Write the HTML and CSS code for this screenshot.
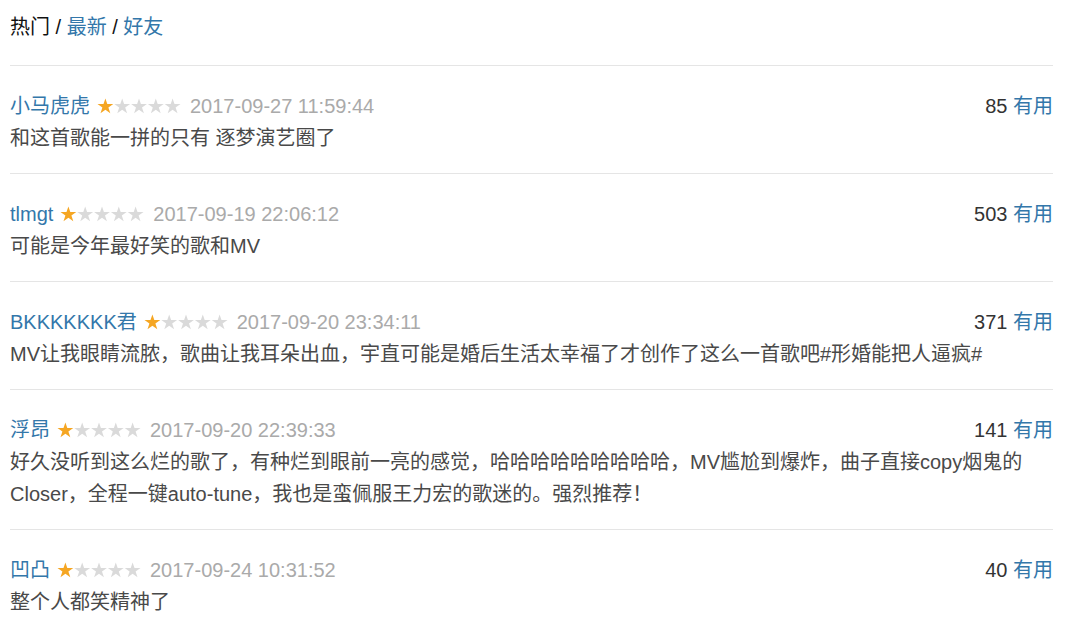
FILE: index.html
```html
<!DOCTYPE html>
<html lang="zh-CN">
<head>
  <meta charset="UTF-8">
  <title>短评</title>
  <link rel="stylesheet" href="styles.css">
</head>
<body>
  <div class="comentarios">
    <div class="pestanas">
      <span>热门</span> / <a href="#">最新</a> / <a href="#">好友</a>
    </div>

    <div class="comentario">
      <div class="cabecera">
        <a href="#" class="autor">小马虎虎</a>
        <svg class="estrellas" viewBox="0 0 84 16"><use href="#s1"/></svg>
        <span class="fecha">2017-09-27 11:59:44</span>
        <span class="votos"><span class="numero">85</span> <a href="#">有用</a></span>
      </div>
      <p class="texto">和这首歌能一拼的只有 逐梦演艺圈了</p>
    </div>

    <div class="comentario">
      <div class="cabecera">
        <a href="#" class="autor">tlmgt</a>
        <svg class="estrellas" viewBox="0 0 84 16"><use href="#s1"/></svg>
        <span class="fecha">2017-09-19 22:06:12</span>
        <span class="votos"><span class="numero">503</span> <a href="#">有用</a></span>
      </div>
      <p class="texto">可能是今年最好笑的歌和MV</p>
    </div>

    <div class="comentario">
      <div class="cabecera">
        <a href="#" class="autor">BKKKKKKK君</a>
        <svg class="estrellas" viewBox="0 0 84 16"><use href="#s1"/></svg>
        <span class="fecha">2017-09-20 23:34:11</span>
        <span class="votos"><span class="numero">371</span> <a href="#">有用</a></span>
      </div>
      <p class="texto">MV让我眼睛流脓，歌曲让我耳朵出血，宇直可能是婚后生活太幸福了才创作了这么一首歌吧#形婚能把人逼疯#</p>
    </div>

    <div class="comentario">
      <div class="cabecera">
        <a href="#" class="autor">浮昂</a>
        <svg class="estrellas" viewBox="0 0 84 16"><use href="#s1"/></svg>
        <span class="fecha">2017-09-20 22:39:33</span>
        <span class="votos"><span class="numero">141</span> <a href="#">有用</a></span>
      </div>
      <p class="texto">好久没听到这么烂的歌了，有种烂到眼前一亮的感觉，哈哈哈哈哈哈哈哈哈，MV尴尬到爆炸，曲子直接copy烟鬼的Closer，全程一键auto-tune，我也是蛮佩服王力宏的歌迷的。强烈推荐！</p>
    </div>

    <div class="comentario">
      <div class="cabecera">
        <a href="#" class="autor">凹凸</a>
        <svg class="estrellas" viewBox="0 0 84 16"><use href="#s1"/></svg>
        <span class="fecha">2017-09-24 10:31:52</span>
        <span class="votos"><span class="numero">40</span> <a href="#">有用</a></span>
      </div>
      <p class="texto">整个人都笑精神了</p>
    </div>
  </div>

  <svg width="0" height="0" class="oculto">
    <defs>
      <path id="st" d="M8.4 0.4 L10.3 6 L16.3 6 L11.4 9.6 L13.3 15.3 L8.4 11.8 L3.5 15.3 L5.4 9.6 L0.5 6 L6.5 6 Z"/>
      <g id="s1">
        <use href="#st" fill="#f5a623"/>
        <use href="#st" x="16.8" fill="#dadada"/>
        <use href="#st" x="33.6" fill="#dadada"/>
        <use href="#st" x="50.4" fill="#dadada"/>
        <use href="#st" x="67.2" fill="#dadada"/>
      </g>
    </defs>
  </svg>
</body>
</html>
```

FILE: styles.css
```css
body {
  margin: 0;
  font-family: "Liberation Sans", "Noto Sans CJK SC", sans-serif;
  font-size: 20px;
  line-height: 32px;
  color: #494949;
  background: #fff;
}

a {
  color: #3377aa;
  text-decoration: none;
}

.comentarios {
  width: 1043px;
  padding: 11px 0 0 10px;
}

.pestanas {
  color: #111;
  padding-bottom: 22px;
}

.comentario {
  border-top: 1px solid #e5e5e5;
  padding: 24px 0 19px;
}

.cabecera {
  display: flex;
  align-items: center;
}

.estrellas {
  width: 84px;
  height: 16px;
  margin: 0 9px 0 7px;
}

.fecha {
  color: #aaa;
}

.votos {
  margin-left: auto;
}

.numero {
  color: #333;
}

.texto {
  margin: 0;
}

.oculto {
  position: absolute;
}
```
